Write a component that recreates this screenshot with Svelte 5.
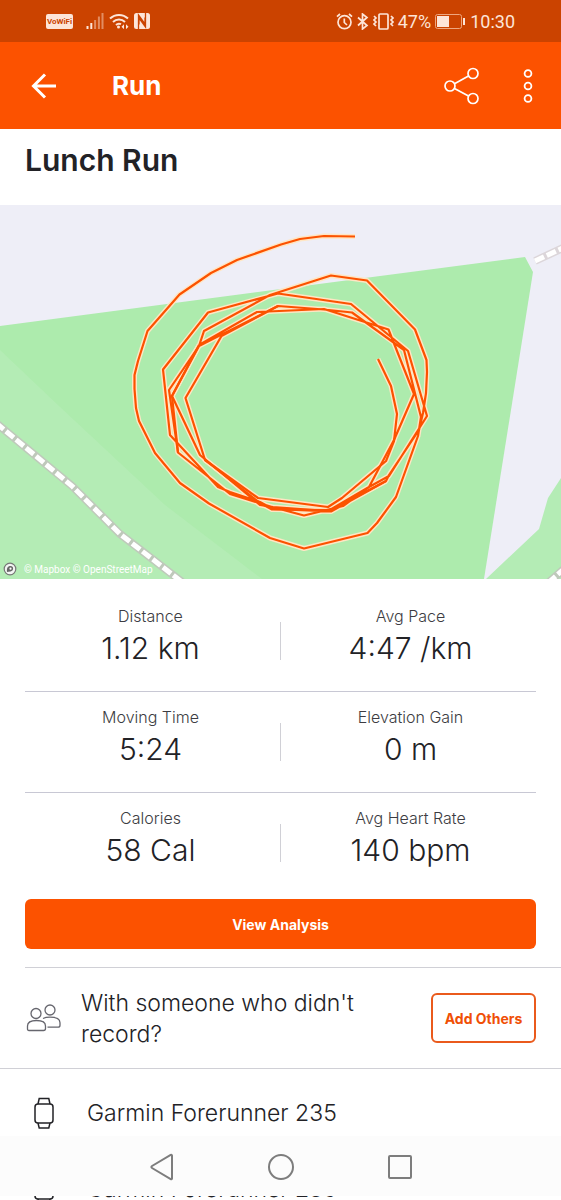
<script>
  const stats = [
    [{ label: "Distance", value: "1.12 km" }, { label: "Avg Pace", value: "4:47 /km" }],
    [{ label: "Moving Time", value: "5:24" }, { label: "Elevation Gain", value: "0 m" }],
    [{ label: "Calories", value: "58 Cal" }, { label: "Avg Heart Rate", value: "140 bpm" }],
  ];

  const device = "Garmin Forerunner 235";

  // laps of the run, in map coordinates
  const laps = [
    "355,31.5 324,31 300,34 281,39.5 237,55 211,68 179.5,89.5 147.5,126 138,156 134.5,170 134.5,184 136,203 139,216 155,248 180,278 209,298.5 270,333 304,343.5 367.5,328 377,318 396,292 418,231 421,212 404,145 352,107.5 324,104.5 278,101 199,141 169,185 178,247.5 230,289 272,302 304,310.5 343,301 369,282 389,271 427,211 408,146 351,99 278,88.5 208,107.5 163,164.5 170,230 218,282 230,287 260,297 273,304 331,306.5 386,276 389,270 419,225 423,208 426,188 427,167 426.5,155 415,124.5 367,75.5 331,70.5 270,90 204,126 199,141 172,191 200,250 260,300 273,302 328,306 369,282 394,235 414,189 388.5,124.5 324,104 257,107 199,140",
    "378,154 391,181 397,209 394,236 386,256 342,293 328,302 258,293 205,255 185.5,193 221.5,131 278,101",
    "199,140 172,191 178,247.5",
    "205,255 260,298 272,304.5 331,305 386,276",
  ];
</script>

<div class="app">
  <div class="status">
    <span class="vowifi">VoWiFi</span>
    <svg class="signal" width="18" height="16" viewBox="0 0 18 16">
      <path d="M1.500 16v-3M5.300 16v-6" />
      <path class="dim" d="M9.100 16V7M12.900 16V3.500M16.500 16V0" />
    </svg>
    <svg width="20" height="16" viewBox="0 0 20 16" fill="none" stroke="#fde5d8" stroke-width="2">
      <path d="M1 5.500a13 13 0 0 1 18 0M4 9a8.500 8.500 0 0 1 12 0M7 12a4.500 4.500 0 0 1 5-.8" />
      <circle cx="9.500" cy="14" r="1.500" fill="#fde5d8" stroke="none" />
      <path d="M12.500 13.700l2.500-2.500v5zM19.500 13.700L17 11.200v5z" fill="#fde5d8" stroke="none" />
    </svg>
    <svg width="16" height="16" viewBox="0 0 16 16">
      <rect width="16" height="16" rx="2.500" fill="#fde5d8" />
      <path d="M4.500 16V2l6.500 9V4.500M11.500 0v14L5 5v6.500" fill="none" stroke="#cb4300" stroke-width="1.300" />
    </svg>

    <div class="status-right">
      <svg width="17" height="17" viewBox="0 0 17 17" fill="none" stroke="#fde5d8" stroke-width="1.700">
        <circle cx="8.500" cy="9.200" r="6.500" />
        <path d="M8.300 5.500v4l2.700 2.500M1 3.700L4 1M16 3.700L13 1" />
      </svg>
      <svg width="12" height="17" viewBox="0 0 12 17" fill="none" stroke="#fde5d8" stroke-width="1.700">
        <path d="M1 4.500l9 8-4.500 3.500V1L10 4.500l-9 8" />
      </svg>
      <svg width="21" height="17" viewBox="0 0 21 17" fill="none" stroke="#fde5d8" stroke-width="1.700">
        <rect x="6" y="1" width="9" height="15" rx="1" />
        <path d="M1 3l2 2-2 2 2 2-2 2 2 2M18 3l2 2-2 2 2 2-2 2 2 2" />
      </svg>
      <span>47%</span>
      <svg width="31" height="15" viewBox="0 0 31 15">
        <rect x=".5" y=".5" width="26" height="14" rx="2" fill="none" stroke="#eea67f" />
        <rect x="2" y="2" width="12" height="11" fill="#fde5d8" />
        <rect x="28" y="4" width="2" height="7" fill="#fde5d8" />
      </svg>
      <span>10:30</span>
    </div>
  </div>

  <header>
    <button class="icon" aria-label="Back">
      <svg width="26" height="26" viewBox="0 0 26 26" fill="none" stroke="#fff" stroke-width="3">
        <path d="M25 13H3M14 1.500L2.500 13 14 24.500" />
      </svg>
    </button>
    <span class="screen">Run</span>
    <button class="icon share" aria-label="Share">
      <svg width="36" height="38" viewBox="0 0 36 38" fill="none" stroke="#fff" stroke-width="1.700">
        <circle cx="6" cy="19" r="5" />
        <circle cx="29" cy="6.500" r="5" />
        <circle cx="29" cy="31.500" r="5" />
        <path d="M10.500 16.700L24.500 9M10.500 21.500L24.500 29" />
      </svg>
    </button>
    <button class="icon" aria-label="More options">
      <svg width="10" height="34" viewBox="0 0 10 34" fill="none" stroke="#fff" stroke-width="1.800">
        <circle cx="5" cy="4.500" r="3.400" />
        <circle cx="5" cy="17" r="3.400" />
        <circle cx="5" cy="29.500" r="3.400" />
      </svg>
    </button>
  </header>

  <h1>Lunch Run</h1>

  <div class="map">
    <svg viewBox="0 0 561 374">
      <rect width="561" height="374" fill="#eeeef7" />
      <path d="M0 121L525 52l8 15-49 307H0z" fill="#adebad" />
      <path d="M0 145l60 57 105 98 97 74H0z" fill="#b4ecb5" />
      <path d="M486 374l53-50 9-31 13-20v101z" fill="#b4ecb5" />
      <g fill="none">
        <path class="road" d="M-4 218L72 281l48 48 62 48" />
        <path class="dash" d="M-4 218L72 281l48 48 62 48" />
        <path class="road light" d="M535 56l30-14" />
        <path class="dash" d="M535 56l30-14" />
        <path class="road" d="M548 378l16-14" />
        <path class="dash" d="M548 378l16-14" />
      </g>
      {#each laps as points}
        <polyline class="halo" {points} />
      {/each}
      {#each laps as points}
        <polyline class="track" {points} />
      {/each}
    </svg>
    <div class="credit">
      <svg width="14" height="14" viewBox="0 0 14 14">
        <circle cx="7" cy="7" r="5.800" fill="#f3f5f3" stroke="#777" stroke-width="1.200" />
        <path d="M4 10c-.5-4 .8-6 3.500-6 3.500 0 3.500 5 0 5.500C6 9.800 5 10 4 10z" fill="#666" />
        <circle cx="7.500" cy="6.700" r="1.100" fill="#fff" />
      </svg>
      <span>© Mapbox © OpenStreetMap</span>
    </div>
  </div>

  <div class="stats">
    {#each stats as [left, right]}
      <div class="row">
        <div class="stat">
          <span class="label">{left.label}</span>
          <span class="value">{left.value}</span>
        </div>
        <div class="divider"></div>
        <div class="stat">
          <span class="label">{right.label}</span>
          <span class="value">{right.value}</span>
        </div>
      </div>
    {/each}
    <button class="analysis">View Analysis</button>
  </div>

  <div class="others">
    <svg width="36" height="28" viewBox="0 0 36 28" fill="none" stroke="#66666e" stroke-width="1.300">
      <circle cx="11" cy="9.500" r="5" />
      <circle cx="25" cy="6" r="5" />
      <path d="M2.500 25v-3c0-4 4-5.500 9-5.500s9 1.500 9 5.500v2.500c0 1.500-.5 2-2 2H4c-1 0-1.500-.5-1.500-1.500z" />
      <path d="M18 14.500c2-1 4-1.300 7-1.300 5 0 10 1.500 10 5.500v2.500c0 1.500-.5 2-2 2H22.500" />
    </svg>
    <p>With someone who didn't record?</p>
    <button class="add">Add Others</button>
  </div>

  {#snippet watch()}
    <svg width="20" height="32" viewBox="0 0 20 32" fill="none" stroke="#222226" stroke-width="1.500">
      <rect x="1" y="7" width="18" height="19" rx="3" />
      <path d="M4 7l1.200-5.500h9.600L16 7M4 26l1.200 5h9.600l1.200-5" />
    </svg>
    <span>{device}</span>
  {/snippet}

  <div class="device">{@render watch()}</div>

  <nav>
    <button class="icon" aria-label="Back">
      <svg width="24" height="28" viewBox="0 0 24 28">
        <path d="M22 2.500v23c0 .7-.7 1-1.300.7L2 15c-.8-.5-.8-1.500 0-2L20.700 1.800c.6-.3 1.300 0 1.300.7z" />
      </svg>
    </button>
    <button class="icon" aria-label="Home">
      <svg width="28" height="28" viewBox="0 0 28 28"><circle cx="14" cy="14" r="12" /></svg>
    </button>
    <button class="icon" aria-label="Recent apps">
      <svg width="24" height="24" viewBox="0 0 24 24"><rect x="1" y="1" width="22" height="22" rx="1" /></svg>
    </button>
  </nav>

  <!-- the list carries on below the navigation bar -->
  <div class="peek" aria-hidden="true">
    <div class="device">{@render watch()}</div>
  </div>
</div>

<style>
  :global(body) {
    background: #fff;
  }

  .app {
    font-family: Inter, "Liberation Sans", sans-serif;
    font-weight: 300;
    color: #222226;
  }

  svg {
    display: block;
    flex: none;
  }

  button {
    font-family: inherit;
    cursor: pointer;
  }

  .icon {
    padding: 0;
    border: none;
    background: none;
  }

  .status {
    display: flex;
    align-items: center;
    gap: 5px;
    height: 42px;
    padding: 0 46px;
    background: #cb4300;
    color: #fde5d8;
    font-family: Roboto, sans-serif;
    font-size: 18px;
    font-weight: 400;
  }

  .vowifi {
    width: 27px;
    border-radius: 2px;
    background: #fde5d8;
    color: #cb4300;
    font-size: 8px;
    font-weight: 700;
    line-height: 15px;
    text-align: center;
  }

  .signal {
    margin-left: 8px;
    stroke: #fde5d8;
    stroke-width: 2;
  }

  .dim {
    stroke: #e28d62;
  }

  .status-right {
    display: flex;
    align-items: center;
    gap: 4px;
    margin-left: auto;
  }

  header {
    display: flex;
    align-items: center;
    height: 87px;
    padding: 0 28px 0 31px;
    background: #fc5200;
    color: #fff;
  }

  .screen {
    margin-left: 55px;
    font-size: 26px;
    font-weight: 700;
  }

  .share {
    margin-left: auto;
    margin-right: 43px;
  }

  h1 {
    margin: 0;
    padding: 13px 25px 27px;
    font-size: 30px;
    font-weight: 600;
    line-height: 36px;
  }

  .map {
    position: relative;
  }

  .map > svg {
    width: 100%;
    height: auto;
  }

  .road {
    stroke: #bfc9bb;
    stroke-width: 8;
  }

  .light {
    stroke: #dcd6da;
  }

  .dash {
    stroke: #fff;
    stroke-width: 5;
    stroke-dasharray: 10 3;
  }

  .halo,
  .track {
    fill: none;
    stroke: #ffe6c4;
    stroke-width: 5;
    stroke-linejoin: round;
  }

  .track {
    stroke: #fc5200;
    stroke-width: 2.2;
  }

  .credit {
    position: absolute;
    left: 3px;
    bottom: 3px;
    display: flex;
    align-items: center;
    gap: 7px;
    color: #fff;
    font-family: Roboto, sans-serif;
    font-size: 10px;
    font-weight: 400;
  }

  .stats {
    padding: 12px 25px 18px;
  }

  .row {
    display: flex;
    gap: 4px;
    height: 100px;
    border-bottom: 1px solid #c8c8d4;
  }

  .row:nth-child(3) {
    border-bottom: none;
  }

  .stat {
    flex: 1;
    display: flex;
    flex-direction: column;
    align-items: center;
    padding-top: 14px;
  }

  .divider {
    width: 1px;
    height: 38px;
    margin-top: 31px;
    background: #d0d0d6;
  }

  .label {
    font-size: 16px;
    line-height: 22px;
    color: #3c3c42;
  }

  .value {
    font-size: 30px;
    line-height: 42px;
  }

  .analysis {
    display: block;
    width: 100%;
    height: 50px;
    margin-top: 6px;
    border: none;
    border-radius: 6px;
    background: #fc5200;
    color: #fff;
    font-size: 14px;
    font-weight: 700;
  }

  .others {
    display: flex;
    align-items: center;
    height: 100px;
    padding: 1px 25px 0;
    border-bottom: 1px solid #d0d0d6;
    background: linear-gradient(#d0d0d6, #d0d0d6) 25px 0 / 100% 1px no-repeat;
  }

  .others p {
    flex: 1;
    margin: 0 60px 0 20px;
    padding-top: 2px;
    font-size: 23px;
    line-height: 31px;
  }

  .add {
    width: 105px;
    height: 50px;
    padding: 0;
    border: 2px solid #ea5a1c;
    border-radius: 6px;
    background: #fff;
    color: #f04f06;
    font-size: 14px;
    font-weight: 700;
  }

  .device {
    display: flex;
    align-items: center;
    gap: 33px;
    padding: 28px 34px 7px;
    font-size: 23px;
    line-height: 28px;
  }

  nav {
    display: flex;
    align-items: center;
    justify-content: center;
    gap: 93px;
    height: 60px;
    background: #fcfcfc;
  }

  nav svg {
    padding: 2px 0 0;
    fill: none;
    stroke: #7d7d7d;
    stroke-width: 2;
  }

  .peek {
    display: flex;
    align-items: flex-end;
    height: 4px;
    overflow: hidden;
  }

  .peek .device {
    height: 23px;
    padding: 0 34px;
  }
</style>
